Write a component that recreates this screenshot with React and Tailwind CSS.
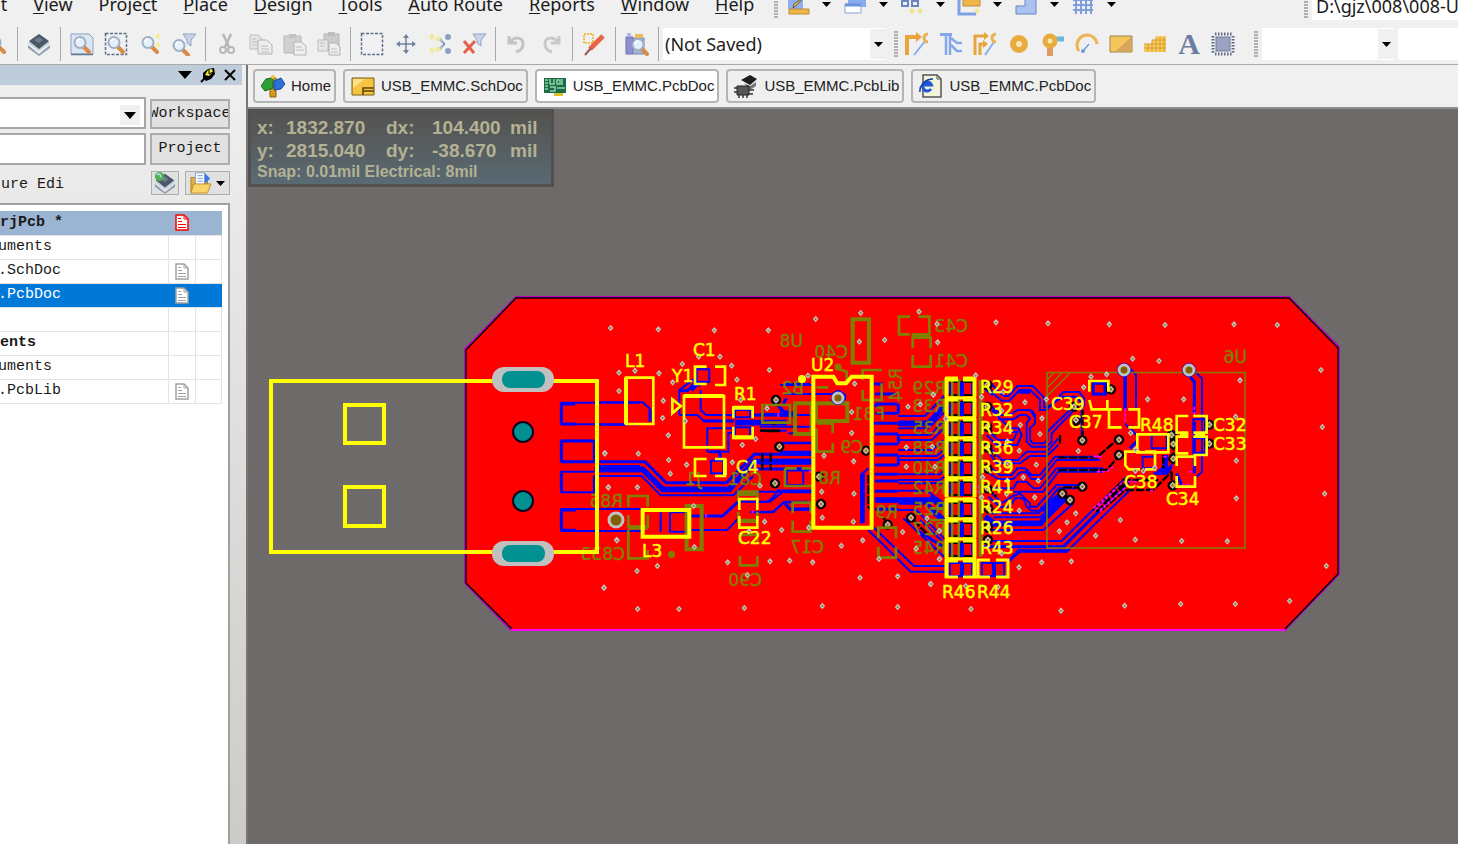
import React, { useState } from 'react';

const MENUS = [
    { text: 'View', key: 0 },
    { text: 'Project', key: 5 },
    { text: 'Place', key: 0 },
    { text: 'Design', key: 0 },
    { text: 'Tools', key: 0 },
    { text: 'Auto Route', key: 0 },
    { text: 'Reports', key: 0 },
    { text: 'Window', key: 0 },
    { text: 'Help', key: 0 }
];

/* ---------- small shared pieces ---------- */

function Svg({ size = 24, children }) {
    return (
        <svg width={ size } height={ size } viewBox="0 0 24 24" fill="none" className="shrink-0" aria-hidden="true">
            { children }
        </svg>
    );
}

function Arrow({ className = '' }) {
    return (
        <svg width="9" height="5" viewBox="0 0 9 5" className={ className } aria-hidden="true">
            <path d="M0 0h9L4.5 5z" fill="#000" />
        </svg>
    );
}

function Grip() {
    return (
        <div className="flex w-1 shrink-0 flex-col gap-px" aria-hidden="true">
            { [...Array(9)].map((_, i) => <span key={ i } className="h-0.5 w-1 bg-[#b0b0b0]" />) }
        </div>
    );
}

function Sep() {
    return <div className="mx-1 h-[34px] w-px shrink-0 bg-[#a8a8a8]" />;
}

function Tool({ label, children }) {
    return (
        <button aria-label={ label } className="flex h-8 w-[34px] shrink-0 items-center justify-center">
            { children }
        </button>
    );
}

function Glass() {
    return (
        <>
            <path d="M14 15l5 5" stroke="#d98a45" strokeWidth="4" strokeLinecap="round" />
            <circle cx="10" cy="10.500" r="5.500" fill="#e4f0fb" stroke="#9fb0c6" strokeWidth="2" />
            <path d="M7 10a3 3 0 013-3" stroke="#fff" strokeWidth="1.500" />
        </>
    );
}

function Funnel() {
    return <path d="M11 2h13l-5 6v6l-4-3V8z" fill="#c6d5ea" stroke="#8fa3bf" />;
}

/* ---------- toolbar icons ---------- */

const icons = {
    layers: (
        <>
            <path d="M1 13l11 9 11-9v3l-11 8L1 16z" fill="#8d9eb0" />
            <path d="M1 11l11 8 11-8-2-2H3z" fill="#c2ced9" />
            <path d="M2 9l10-7 10 7-10 8z" fill="#4a5766" />
            <path d="M7 8l5-3 4 3-4 3z" fill="#6d7d8e" />
        </>
    ),
    zoomDoc: (
        <>
            <path d="M1 2h18l4 4v16H1z" fill="#dbe6f4" stroke="#8b9fbd" />
            <path d="M1 22.500h22" stroke="#5f7597" strokeWidth="1.500" />
            <Glass />
        </>
    ),
    zoomArea: (
        <>
            <path d="M1.500 1.500h21v21h-21z" stroke="#5c6f8c" strokeWidth="1.500" strokeDasharray="3 1.500" />
            <Glass />
        </>
    ),
    zoomSel: (
        <>
            <Glass />
            <path d="M20 1l3 3-3 3-3-3zM20 10l3 3-3 3-3-3z" fill="#f4ee9a" />
        </>
    ),
    zoomFilter: (
        <>
            <Funnel />
            <g transform="translate(-3 3)"><Glass /></g>
        </>
    ),
    cut: (
        <>
            <path d="M8 2l6 13M16 2l-6 13" stroke="#b7b7b7" strokeWidth="2.500" />
            <circle cx="8" cy="18" r="3" stroke="#b7b7b7" strokeWidth="2" />
            <circle cx="16" cy="18" r="3" stroke="#b7b7b7" strokeWidth="2" />
        </>
    ),
    copy: (
        <>
            <path d="M1 3h8l4 4v10H1z" fill="#e6e6e6" stroke="#bcbcbc" />
            <path d="M9 8h9l5 5v9H9z" fill="#ededed" stroke="#b2b2b2" />
            <path d="M12 14h7M12 17h8M12 20h8M3 7h4M3 10h5M3 13h5" stroke="#bdbdbd" />
        </>
    ),
    paste: (
        <>
            <path d="M1 4h17v17H1z" fill="#d0d0d0" stroke="#b9b9b9" />
            <path d="M6 2h7v4H6z" fill="#c2c2c2" />
            <path d="M11 10h7l5 4v9H11z" fill="#efefef" stroke="#b4b4b4" />
            <path d="M13 15h6M13 18h8" stroke="#bdbdbd" />
        </>
    ),
    pasteMulti: (
        <>
            <path d="M7 2h15v16H7z" fill="#cbcbcb" stroke="#b5b5b5" />
            <path d="M11 0h7v4h-7z" fill="#bdbdbd" />
            <path d="M1 8h10v11H1z" fill="#e8e8e8" stroke="#bbb" />
            <path d="M12 11h7l4 4v8H12z" fill="#efefef" stroke="#b0b0b0" />
            <path d="M3 11h5M3 14h5M14 17h6M14 20h7" stroke="#bdbdbd" />
        </>
    ),
    select: <path d="M1.500 1.500h21v21h-21z" stroke="#5c6f8c" strokeWidth="1.500" strokeDasharray="3 1.500" />,
    move: (
        <>
            <path d="M12 4v17M3 12h18" stroke="#71829c" strokeWidth="1.500" />
            <path d="M12 2l3 4H9zM12 22l3-4H9zM2 12l4-3v6zM22 12l-4-3v6z" fill="#71829c" />
        </>
    ),
    deselect: (
        <>
            <path d="M9 6l7 6-7 6M12 6l5 6-5 6" stroke="#7389ad" />
            <path d="M4 1l3 4-3 3-3-3zM10 4l3 3-3 3-3-3zM4 15l3 3-3 4-3-4zM10 14l3 3-3 3-3-3z" fill="#efe998" />
            <circle cx="20" cy="5" r="3" fill="#8ca0c0" />
            <circle cx="20" cy="19" r="3" fill="#8ca0c0" />
        </>
    ),
    clearFilter: (
        <>
            <Funnel />
            <path d="M2 9l10 12M13 9L2 21" stroke="#e8604c" strokeWidth="3" />
        </>
    ),
    undo: <path d="M4 4v7h8M5 10c5-6 13-5 13 2 0 4-3 7-7 8" stroke="#c3c3c3" strokeWidth="3" />,
    redo: <path d="M20 4v7h-8M19 10C14 4 6 5 6 12c0 4 3 7 7 8" stroke="#c9c9c9" strokeWidth="3" />,
    pencil: (
        <>
            <path d="M2 2h9v9H2z" stroke="#eebf4c" strokeWidth="2" strokeDasharray="2 1" />
            <path d="M21 4L8 17" stroke="#e8654a" strokeWidth="5" />
            <path d="M9 16l-6 7" stroke="#9a5a50" strokeWidth="2" />
        </>
    ),
    browse: (
        <>
            <path d="M1 5h7v17H1z" fill="#8f8fd0" stroke="#6e70ae" />
            <path d="M2 1h4v4H2z" fill="#b2b7dd" />
            <path d="M8 6h11v16H8z" fill="#a5b5dc" stroke="#7787b5" />
            <path d="M10 2h8v4h-8z" fill="#ecb95c" />
            <g transform="translate(3 2)"><Glass /></g>
        </>
    ),
    route: (
        <>
            <path d="M2 23V5h10" stroke="#e9a53c" strokeWidth="4" />
            <path d="M11 0l6 5-6 5z" fill="#e9a53c" />
            <path d="M9 23L21 8" stroke="#88aef0" strokeWidth="2" />
            <path d="M23 2a4 4 0 000 8" stroke="#e9b255" strokeWidth="3" />
        </>
    ),
    routeDiff: (
        <>
            <path d="M1 2.500h12" stroke="#84a6ea" strokeWidth="3" />
            <path d="M7 2v21M11 2v21" stroke="#84a6ea" strokeWidth="2.500" />
            <path d="M12 6l6 5h5M12 13l6 6h5" stroke="#84a6ea" strokeWidth="2.500" />
        </>
    ),
    routeMulti: (
        <>
            <path d="M2 23V4h10M7 23V12h4" stroke="#e9a53c" strokeWidth="3" />
            <path d="M11 0l5 4-5 4zM10 8l5 4-5 4z" fill="#e9a53c" />
            <path d="M12 23l9-13" stroke="#88aef0" strokeWidth="2" />
            <path d="M23 2a4 4 0 000 8" stroke="#e9b255" strokeWidth="3" />
        </>
    ),
    pad: <circle cx="12" cy="12" r="6" fill="#f7e7b8" stroke="#e7ab3e" strokeWidth="6" />,
    via: (
        <>
            <path d="M14 7h9" stroke="#6fb7d6" strokeWidth="5" />
            <path d="M9 13v11" stroke="#dd9a63" strokeWidth="6" />
            <circle cx="9" cy="9" r="5" fill="#f7e7b8" stroke="#e7ab3e" strokeWidth="5" />
        </>
    ),
    arc: (
        <>
            <path d="M4 19A10 10 0 1122 12" stroke="#eeb355" strokeWidth="3" />
            <path d="M8 19l6-7" stroke="#6d9be8" strokeWidth="1.500" />
            <circle cx="8" cy="19" r="2" fill="#6d9be8" />
        </>
    ),
    fill: (
        <>
            <path d="M1 4h22v16H1z" fill="#f5c75a" stroke="#a5814e" />
            <path d="M22 5v14H7z" fill="#d9a45c" />
        </>
    ),
    polygon: (
        <>
            <path d="M1 12h8V8h4V4h10v16H1z" fill="#f7cc5c" />
            <path d="M1 12h22M1 16h22M9 8h14M5 12v8M9 8v12M13 5v15M17 5v15M21 5v15" stroke="#d89c33" />
        </>
    ),
    component: (
        <>
            <path d="M5 5h14v14H5z" fill="#9aa3c2" stroke="#707b9b" />
            <path d="M4 2h17M4 22h17" stroke="#5b6a85" strokeWidth="3" strokeDasharray="1.500 1.500" />
            <path d="M2 4v17M22 4v17" stroke="#5b6a85" strokeWidth="3" strokeDasharray="1.500 1.500" />
        </>
    )
};

const TOOL_GROUPS = [
    ['layers'],
    ['zoomDoc', 'zoomArea', 'zoomSel', 'zoomFilter'],
    ['cut', 'copy', 'paste', 'pasteMulti'],
    ['select', 'move', 'deselect', 'clearFilter'],
    ['undo', 'redo'],
    ['pencil'],
    ['browse']
];

const DRAW_TOOLS = ['route', 'routeDiff', 'routeMulti', 'pad', 'via', 'arc', 'fill', 'polygon', 'text', 'component'];

const UTILITY_ICONS = [
    <>
        <path d="M2 4h15v13H2z" fill="#8fb0ec" />
        <path d="M19 4l-9 10-3 2 1-4z" fill="#e9c04f" stroke="#555" />
        <path d="M3 17h20v5H3z" fill="#f0b648" stroke="#b98b3c" />
    </>,
    <>
        <path d="M5 5h18v10H5z" fill="#88aaf0" />
        <path d="M2 12h16v9H2z" fill="#fff" stroke="#8ba4d2" />
        <path d="M2 13h16" stroke="#6f92de" strokeWidth="3" />
    </>,
    <>
        <path d="M2 9h6v5H2zM12 9h6v5h-6z" stroke="#6a86c0" strokeWidth="2" />
        <path d="M12 16l3 3-3 3-3-3zM20 16l3 3-3 3-3-3z" fill="#efe58a" />
    </>,
    <>
        <path d="M2 4v18h17" stroke="#7fa0e4" strokeWidth="3" />
        <path d="M6 6h17v8H6z" fill="#efb648" stroke="#b98b3c" />
        <path d="M20 16l3 3-3 3-3-3z" fill="#efe58a" />
    </>,
    <path d="M2 14h9V5h11v17H2z" fill="#a9c2f2" stroke="#6c87bd" />,
    <path d="M2 8h20M2 13h20M2 18h20M5 4v18M10 4v18M15 4v18M20 4v18" stroke="#7f9fdc" strokeWidth="2" />
];

function MenuBar() {
    return (
        <div className="flex h-6 shrink-0 overflow-hidden">
            <div className="-mt-2 flex w-full items-start">
                <nav className="flex w-[774px] shrink-0 gap-[26px] text-lg leading-6">
                    <button className="-ml-1">it</button>
                    { MENUS.map((menu) => (
                        <button key={ menu.text } className="whitespace-nowrap">
                            { menu.text.slice(0, menu.key) }
                            <u className="underline-offset-2">{ menu.text[menu.key] }</u>
                            { menu.text.slice(menu.key + 1) }
                        </button>
                    )) }
                </nav>
                <Grip />
                <div className="flex w-[526px] shrink-0">
                    { UTILITY_ICONS.map((icon, i) => (
                        <button key={ i } aria-label="Utilities" className="flex w-[57px] items-center pl-2">
                            <Svg>{ icon }</Svg>
                            <Arrow className="ml-3" />
                        </button>
                    )) }
                </div>
                <Grip />
                <input
                    aria-label="Document path"
                    className="ml-1 h-7 min-w-0 flex-1 bg-white pl-1 text-lg leading-6"
                    defaultValue="D:\gjz\008\008-USB_EMMC"
                />
            </div>
        </div>
    );
}

function ToolBar() {
    return (
        <div className="flex h-[41px] shrink-0 items-center overflow-hidden border-b border-[#a9a9a9]">
            <button aria-label="Zoom" className="flex w-[13px] shrink-0 justify-end overflow-hidden pr-1">
                <Svg><Glass /></Svg>
            </button>
            { TOOL_GROUPS.map((group) => (
                <React.Fragment key={ group[0] }>
                    <Sep />
                    { group.map((name) => (
                        <Tool key={ name } label={ name }><Svg>{ icons[name] }</Svg></Tool>
                    )) }
                </React.Fragment>
            )) }
            <Sep />
            <div className="relative w-[223px] shrink-0">
                <select
                    aria-label="Filter"
                    className="h-8 w-full appearance-none bg-white pl-0.5 text-lg leading-8 text-[#222]"
                >
                    <option>(Not Saved)</option>
                </select>
                <span className="pointer-events-none absolute inset-y-px right-0 flex w-4 items-center justify-center bg-[#f0f0f0]">
                    <Arrow />
                </span>
            </div>
            <div className="ml-2"><Grip /></div>
            <div className="flex w-[356px] shrink-0 pl-0.5">
                { DRAW_TOOLS.map((name) => (
                    <Tool key={ name } label={ name }>
                        { name === 'text'
                            ? <span className="font-['Liberation_Serif',serif] text-[30px] leading-8 font-bold text-[#6b7da3]">A</span>
                            : <Svg>{ icons[name] }</Svg> }
                    </Tool>
                )) }
            </div>
            <Grip />
            <div className="relative ml-1 w-[132px] shrink-0">
                <select aria-label="Variant" className="h-8 w-full appearance-none bg-white"><option></option></select>
                <span className="pointer-events-none absolute inset-y-px right-0 flex w-4 items-center justify-center bg-[#f0f0f0]">
                    <Arrow />
                </span>
            </div>
            <div className="ml-1 h-8 min-w-0 flex-1 bg-white" />
        </div>
    );
}

/* ---------- projects panel ---------- */

function DocIcon({ color }) {
    return (
        <svg width="14" height="17" viewBox="0 0 14 17" fill="#fff" stroke={ color } className="mx-auto block" aria-hidden="true">
            <path d="M1 1h8l4 4v11H1z" strokeWidth="1.500" />
            <path d="M9 1v4h4M3 4.500h3M3 7.500h4M3 10.500h8M3 13.500h8" fill="none" />
        </svg>
    );
}

const ROWS = [
    { text: 'rjPcb *', icon: '#ff0000', kind: 'project' },
    { text: 'uments' },
    { text: '.SchDoc', icon: '#a0a0a0' },
    { text: '.PcbDoc', icon: '#a0a0a0', kind: 'selected' },
    { text: '' },
    { text: 'ents', kind: 'bold' },
    { text: 'uments' },
    { text: '.PcbLib', icon: '#a0a0a0' }
];

const ROW_STYLES = {
    project: 'bg-[#9ab4d1] font-bold',
    selected: 'bg-[#0078d7] text-white',
    bold: 'font-bold'
};

function ProjectsPanel() {
    return (
        <aside className="flex w-[248px] shrink-0 flex-col border-r-2 border-[#777] bg-linear-to-b from-[#f0f0f0] to-[#cdcbc7] font-['Liberation_Mono',monospace] text-[15px]">
            <div className="mr-1 flex h-5 shrink-0 items-center justify-end gap-2 bg-[#bfcddb] pr-1.5">
                <button aria-label="Panel menu">
                    <svg width="14" height="8" viewBox="0 0 14 8"><path d="M0 0h14L7 8z" /></svg>
                </button>
                <button aria-label="Pin">
                    <svg width="16" height="16" viewBox="0 0 16 16">
                        <path d="M1 15l4-4" stroke="#000" strokeWidth="2" />
                        <path d="M3 6l5-4 6-1 1 6-4 5-5 2-3-3z" fill="#000" />
                        <path d="M8 3l4-1 1 3-4 4-4-1z" fill="#f2ea3c" />
                        <path d="M9 3v4l4-2" stroke="#000" fill="none" />
                    </svg>
                </button>
                <button aria-label="Close">
                    <svg width="12" height="12" viewBox="0 0 12 12"><path d="M1 1l10 10M11 1L1 11" stroke="#000" strokeWidth="2" /></svg>
                </button>
            </div>
            <div className="mt-3 flex pr-4">
                <div className="relative flex-1">
                    <select aria-label="Workspace name" className="h-8 w-full appearance-none border-2 border-l-0 border-[#a7a7a7] bg-white">
                        <option></option>
                    </select>
                    <span className="pointer-events-none absolute top-2 right-1.5 flex h-5 w-5 items-center justify-center bg-[#f0f0f0]">
                        <svg width="12" height="7" viewBox="0 0 12 7"><path d="M0 0h12L6 7z" /></svg>
                    </span>
                </div>
                <button className="mt-0.5 ml-1 flex h-[30px] w-20 items-center justify-center overflow-hidden border-2 border-[#adadad] bg-[#e1e1e1]">
                    Workspace
                </button>
            </div>
            <div className="mt-1 flex pr-4">
                <input aria-label="Project name" className="h-8 min-w-0 flex-1 border-2 border-l-0 border-[#a7a7a7] bg-white" />
                <button className="ml-1 h-8 w-20 border-2 border-[#adadad] bg-[#e1e1e1]">Project</button>
            </div>
            <div className="mt-1 flex h-7 items-center pr-4">
                <label className="flex-1 overflow-hidden pt-1 -indent-2 whitespace-nowrap">ture Edi</label>
                <button aria-label="Refresh" className="mr-1.5 flex h-6 w-7 items-center justify-center border border-[#adadad] bg-[#e1e1e1]">
                    <Svg size={ 22 }>
                        { icons.layers }
                        <circle cx="6" cy="5" r="5" fill="#4fb04a" />
                        <path d="M3 3c3-2 5 0 4 3" stroke="#a6d8ef" strokeWidth="2" />
                    </Svg>
                </button>
                <button aria-label="Open" className="flex h-6 w-[45px] items-center justify-center gap-1 border border-[#adadad] bg-[#e1e1e1]">
                    <Svg size={ 22 }>
                        <path d="M1 6h8l2 3h8v13H1z" fill="#e6ae3a" stroke="#b27f22" />
                        <path d="M6 1h10v13H6z" fill="#fff" stroke="#7f9fd6" />
                        <path d="M8 4h6M8 7h6M8 10h6" stroke="#6f93d8" />
                        <path d="M16 1l6 6-6 6z" fill="#3c78e8" />
                        <path d="M4 13h19l-4 10H1z" fill="#f8d468" stroke="#b98a2b" />
                    </Svg>
                    <Arrow />
                </button>
            </div>
            <div className="mt-1.5 mr-4 min-h-0 flex-1 border-t-2 border-r-2 border-[#a0a0a0] bg-white pt-1.5 pr-1.5">
                <table className="w-full table-fixed border-collapse">
                    <tbody>
                        { ROWS.map((row, i) => (
                            <tr key={ i } className={ `h-6 border-b border-[#e3e3e3] ${ ROW_STYLES[row.kind] || '' }` }>
                                <td className={ `overflow-hidden leading-5 whitespace-nowrap ${ row.kind === 'project' || row.kind === 'bold' ? '' : '-indent-0.5' }` }>
                                    { row.text }
                                </td>
                                <td className={ `w-[27px] ${ row.kind === 'project' || row.kind === 'selected' ? '' : 'border-x border-[#e3e3e3]' }` }>
                                    { row.icon && <DocIcon color={ row.icon } /> }
                                </td>
                                <td className={ `w-[26px] ${ row.kind === 'project' || row.kind === 'selected' ? '' : 'border-r border-[#e3e3e3]' }` }></td>
                            </tr>
                        )) }
                    </tbody>
                </table>
            </div>
        </aside>
    );
}

/* ---------- document tabs ---------- */

const TABS = [
    {
        text: 'Home',
        icon: (
            <>
                <path d="M9 4h6v19H9z" fill="#d59a1c" stroke="#8c6310" />
                <path d="M12 4v10l-8 3-4-5 5-7z" fill="#2f9e35" stroke="#176b1f" />
                <path d="M13 7l7-3 4 6-4 5-7 1z" fill="#2f6fd6" stroke="#164a9e" />
                <circle cx="12" cy="3" r="2" fill="#f0c23c" />
            </>
        )
    },
    {
        text: 'USB_EMMC.SchDoc',
        icon: (
            <>
                <path d="M1 4h22v17H1z" fill="#f5c542" stroke="#7d5c10" />
                <path d="M2 5h12L2 14z" fill="#fbe28a" />
                <path d="M12 21v-7h11M12 17h11" stroke="#5d4308" strokeWidth="1.500" />
            </>
        )
    },
    {
        text: 'USB_EMMC.PcbDoc',
        icon: (
            <>
                <path d="M1 4h22v15H1z" fill="#1c6b48" />
                <path d="M2 6h3M2 9h3M2 12h3M2 15h3M7 5v5h4V5M7 13h5v4H7M14 6h3v4h-3zM19 5v6M14 14h8" stroke="#8fd3a5" strokeWidth="1.500" />
                <path d="M11 19h9v3h-9z" fill="#d8c22c" />
            </>
        )
    },
    {
        text: 'USB_EMMC.PcbLib',
        icon: (
            <>
                <path d="M7 6l9-5 7 4-7 6z" fill="#1d1d1d" />
                <path d="M10 9l6 3 6-4v4l-6 4z" fill="#777" />
                <path d="M3 12h12v9H3z" fill="#565656" stroke="#222" />
                <path d="M0 14h3M0 18h3M15 16h5M15 20h4M5 21v3M9 21v3M13 21v3" stroke="#333" strokeWidth="1.500" />
            </>
        )
    },
    {
        text: 'USB_EMMC.PcbDoc',
        icon: (
            <>
                <path d="M4 1h14l4 4v18H4z" fill="#f3f3dc" stroke="#555" strokeWidth="1.500" />
                <path d="M18 1v4h4" stroke="#555" />
                <path d="M12 15a4.500 4.500 0 11.500-4H5" stroke="#1e58d8" strokeWidth="3" />
                <path d="M1 18C0 12 6 5 14 5" stroke="#153f9c" strokeWidth="1.500" />
            </>
        )
    }
];

function DocumentTabs() {
    const [active, setActive] = useState(2);

    return (
        <div className="flex h-11 shrink-0 gap-[7px] overflow-hidden border-b-2 border-[#8f8f8f] px-[5px] pt-1">
            { TABS.map((tab, i) => (
                <button
                    key={ i }
                    onClick={ () => setActive(i) }
                    className={ `flex h-[34px] shrink-0 items-center gap-1.5 rounded-sm border-2 border-[#b5b5b5] pr-[3px] pl-1.5 font-['Liberation_Sans',sans-serif] text-[15px] text-[#222] ${ active === i ? 'bg-white' : 'bg-[#efefef]' }` }
                >
                    <Svg>{ tab.icon }</Svg>
                    { tab.text }
                </button>
            )) }
        </div>
    );
}

/* ---------- board ---------- */

// Board parts are entered on a grid of thirds of a pixel, each from its own origin.
function Layer({ x, y, children }) {
    return <g transform={ `translate(${ x } ${ y }) scale(0.33333)` }>{ children }</g>;
}

const TRACES = [
    {
        x: 260, y: 290,
        thin: [
            'M1140 338H904V403H1140', 'M1002 518V452H904V515H1002', 'M1140 558H1003V607H904V545H1003', 'M1140 657H904V723H1140',
            'M1002 515L1020 528H1140', 'M1010 515H1140'
        ],
        mid: ['M904 342V400M904 342H945M904 402H948', 'M904 455V513M904 453H1000M904 515H1000', 'M904 548V604', 'M904 660V720M904 660H948M904 721H948', 'M1003 455V500M1003 560V604'],
        wide: ['M1003 538H1140']
    },
    {
        x: 600, y: 310,
        thin: [
            'M0 277H128L150 297V330', 'M0 344H80', 'M0 498H125L182 556H400L460 498', 'M0 597H130M0 663H130',
            'M238 315V240L285 205', 'M302 240V300L318 315H400', 'M238 315H292L312 333H400', 'M322 425V355H400',
            'M322 425H385V368H405', 'M270 660H382L420 620', 'M420 575H505L530 550', 'M450 607H520L550 577H640', 'M460 545H640',
            'M540 225H640M560 252H640M545 398H640', 'M290 178H328V215H290Z', 'M333 452H370V490H333Z', 'M182 607V665M210 607H262M210 607V665H262',
            'M405 300H450V322H405ZM405 352H450V380H405Z', 'M560 475H610V525H560Z', 'M480 362H560M480 315H640'
        ],
        mid: [
            'M0 455H135L198 518H380L463 433H560', 'M460 477H560M540 427H640', 'M238 242H262L290 215M275 242L290 225H302',
            'M150 300V335', 'M270 618H368L420 570', 'M460 315H560M310 333H400', 'M330 425H360V445',
            'M560 265L550 280M525 275L550 305', 'M555 580L570 598H640', 'M640 478H600M560 433H640', 'M530 543H640'
        ],
        wide: ['M0 478H128L188 538H388L462 455H640', 'M405 338H560', 'M540 312H580']
    },
    {
        x: 760, y: 300,
        thin: [
            'M415 348H495L552 288', 'M415 385H505L552 338', 'M415 405H510L552 362', 'M415 420H515L552 385', 'M415 450H515L550 420',
            'M415 468H530L552 450', 'M415 480H535L552 465', 'M415 523H540L552 510', 'M415 540H540L552 530', 'M415 550H550', 'M415 572H500L552 610',
            'M415 630H470L552 715', 'M325 690L452 815H555', 'M340 682L462 798H555', 'M430 655L552 770', 'M480 660L552 728',
            'M75 282H215M75 252H150M85 400H155M60 430H155', 'M325 505L303 525V670', 'M0 342H80M0 380H155',
            'M220 310V280L235 272L255 285V300', 'M0 605H30L70 575H150M0 635H40L75 605H150'
        ],
        mid: [
            'M340 252H370M345 282H410M345 312H412M345 340H415M340 370H415M345 402H415M345 432H415M345 465H415M345 495H415M345 523H415M345 543H415M345 574H415M345 603H415M345 628H415',
            'M310 515V670', 'M80 463H155M80 510H155M80 575H155M90 628H155', 'M40 300L75 340', 'M415 610H500L552 660', 'M470 690L552 742',
            'M345 312L355 325M415 312V340M415 402V430M415 465V495'
        ],
        wide: ['M415 370H505L552 318', 'M0 485H155', 'M60 340H90', 'M415 600H530L552 620', 'M345 600H415']
    },
    {
        x: 930, y: 360,
        thin: [
            'M165 65L195 105L215 122H238L268 90H300L330 118V150H350L400 96H448L462 115V140',
            'M180 65L200 90L222 108H236L262 78H308L342 112V142H352L398 110H440L455 130V240',
            'M185 140L215 165H240L262 150H300L315 165V190L300 205V240L308 250H342L352 240V215L430 140',
            'M190 150L210 178H250L270 165H290L300 175L290 190V245L305 260H350L365 245V220L432 150',
            'M170 210L205 240H250L262 215H240M170 225L200 255H262L275 225L265 205H240L225 190L185 150',
            'M180 262L215 300H265L290 275H350L385 235', 'M175 275L200 310H270L300 288H350L385 255',
            'M185 325L210 345H245L262 325H285L305 345H330L375 290H500M170 335L205 357H250L270 337H290L305 357H335L380 300H510',
            'M180 385H250L262 365H290L310 385H330L380 325H520M250 395H310L340 395L385 335H520',
            'M185 400L215 430L245 410L270 400L300 430V440H320L380 375H455', 'M175 410L210 440H240L255 415H280L290 440L305 452H330L385 385H440',
            'M180 460H325L385 405M190 472H330L388 420', 'M170 510H340L430 430', 'M150 543H395L590 350', 'M150 560H400L600 365',
            'M235 605L270 575H410L600 390', 'M0 618H45M0 635H45'
        ],
        mid: ['M265 97H300', 'M305 152L315 170', 'M150 560H400L520 440', 'M240 600L265 572H412', 'M585 45V150', 'M190 492H340', 'M165 85L190 105', 'M490 70H525V102H490Z'],
        wide: ['M165 490H330L400 415', 'M340 480L410 410', 'M165 470L200 495', 'M335 450L385 410', 'M0 445L40 480', 'M0 410L45 445']
    },
    {
        x: 1030, y: 340,
        thin: [
            'M300 85L318 105V205', 'M500 100L516 115V395L500 410', 'M285 250L320 285', 'M338 350H375V385H338Z',
            'M365 285H410V325H365Z', 'M490 238H525V278H490ZM490 295H525V338H490Z', 'M370 400H400L430 370', 'M190 130H228V163H190Z'
        ],
        mid: ['M286 110V200', 'M480 110L493 125V220M493 245V400', 'M375 400H410L425 380M440 400L455 435', 'M300 325L320 305'],
        wide: ['M405 345V385L385 400']
    }
];

// Copper cleared around nets of other layers
const CLEARANCE = [
    { x: 600, y: 310, d: 'M525 262L515 275M530 335L520 345M527 405L540 425M515 510L525 530M487 430V480M512 430V480M500 363H540' },
    { x: 760, y: 300, d: 'M325 525V620L335 632M370 655L385 672M460 660L500 700M0 392H60' },
    { x: 930, y: 360, d: 'M458 150V235M165 75L185 95M165 200L200 225M172 262L195 290M170 385L200 410M150 545H180M435 180V210M390 225V255M385 293H500L560 240M385 330H530L565 290M400 382H450M500 455L595 365M520 430L580 370' },
    { x: 1030, y: 340, d: 'M190 510L280 420H385M215 510L285 450H370L425 395M430 275V350M425 395V435M400 345V385' }
];

const CLASHES = [
    { x: 930, y: 360, d: 'M490 290H515M500 335H530L550 320M495 450L560 385M510 455L570 395M145 375V400' },
    { x: 1030, y: 340, d: 'M286 205V250M493 200V225M195 350H210M190 505L280 425H330M210 510L290 440M400 350H420M360 452H375M455 435H485M475 395H490' },
    { x: 600, y: 310, d: 'M535 310V320M318 612V622M630 480V490M458 600V610' }
];

const OLIVE = [
    {
        x: 600, y: 310,
        d: 'M85 590V558H143V590M85 615V650H143V615M85 660V745H143V720M85 650H143M415 575V545H472V575M415 605V635H472V605M420 700V675H472V700M420 738V766H472V738M487 285H570V338H487Z',
        thick: 'M260 588H305V718H260ZM415 552H472M415 632H472M85 653H143'
    },
    {
        x: 760, y: 300,
        d: 'M450 103H417V50H450M475 50H508V103H475M458 145V113H512V145M458 165V200H512V165M170 262H205M230 205L260 215V250M308 240V210H365M308 270V300H365V250M75 505H110M125 505H155M75 505V558H155M98 640V608H152V640M98 662V695H152V662M355 715V683H408V715M355 740V773H408V740M170 385V455H218V430M170 370H218V400',
        thick: 'M278 58H327V188H278ZM105 310H155V402H105ZM168 310H262V363H168ZM455 105H510'
    },
    { x: 930, y: 360, d: 'M0 445H45M0 480H45', thick: 'M152 60V590' }
];

const YELLOW = [
    {
        x: 600, y: 310,
        d: 'M78 203H160V342H78ZM320 170H285V222H320M345 170H375V225H345M252 258H372V412H252ZM217 268V310L242 288ZM400 325V292H458V325M400 350V384H458V350M320 447H285V498H320M345 447H375V498H345M418 600V567H472V600M418 618V653H472V618',
        thick: 'M128 600H268V680H128ZM375 447V495M400 293H458M400 382H458M252 258H372M78 203V342'
    },
    {
        x: 760, y: 300,
        d: '',
        thick: 'M160 230H220L232 250H258L275 230H335V683H160Z'
    },
    {
        x: 1030, y: 340,
        d: 'M178 155V123H235V155M178 180L185 208H232V180M275 262H237V208H275M295 208H327V262H295M322 283H415V337H322ZM330 388H296L286 376V335H330M345 335H375V388H345M475 228H440V278H475M490 228H530V278H490M475 290H440V340H475M490 290H530V345H490M440 378V350H495V378M440 408V440H495V408',
        thick: 'M450 284H475M495 284H525'
    }
];

const VIAS = [
    { x: 260, y: 290, at: [[1052, 114], [1077, 248], [1077, 303], [1034, 490], [1045, 592], [1070, 750], [1032, 893]] },
    {
        x: 600, y: 310,
        at: [
            [175, 58], [343, 61], [505, 61], [647, 27], [105, 182], [177, 190], [247, 162], [296, 140], [360, 140],
            [395, 167], [411, 209], [218, 217], [190, 272], [188, 324], [205, 376], [256, 333], [422, 270], [508, 180], [501, 295],
            [467, 387], [427, 405], [397, 457], [206, 450], [260, 464], [211, 491], [115, 431], [15, 430], [25, 532], [112, 532],
            [480, 527], [494, 635], [545, 660], [447, 664], [383, 757], [510, 754], [569, 752], [638, 757], [442, 795], [172, 768],
            [111, 783], [283, 711], [281, 588], [51, 691], [12, 833], [113, 897], [237, 897], [433, 894]
        ]
    },
    {
        x: 760, y: 300,
        at: [
            [302, 39], [477, 35], [298, 125], [374, 120], [531, 72], [533, 127], [144, 227], [284, 251], [275, 336], [275, 399],
            [444, 320], [481, 313], [520, 284], [192, 467], [281, 484], [439, 442], [517, 440], [439, 500], [525, 500], [185, 575],
            [282, 581], [187, 653], [280, 665], [146, 683], [308, 721], [244, 737], [357, 777], [428, 696], [501, 655], [538, 693],
            [469, 746], [538, 777], [300, 833], [413, 829], [511, 852], [557, 356], [187, 918], [413, 921], [633, 927]
        ]
    },
    {
        x: 930, y: 360,
        at: [
            [137, 46], [10, 104], [155, 111], [285, 127], [220, 95], [215, 152], [271, 195], [336, 175], [349, 118], [330, 222],
            [232, 244], [268, 272], [319, 314], [237, 312], [158, 352], [280, 352], [325, 362], [232, 362], [314, 412], [155, 412],
            [230, 402], [268, 452], [215, 580], [335, 607], [424, 604], [267, 622], [388, 514], [411, 487], [437, 460], [445, 273],
            [461, 82], [483, 50], [530, 43], [497, 527], [571, 480], [204, 681], [107, 678], [3, 672], [29, 597], [28, 513]
        ]
    },
    {
        x: 1030, y: 340,
        at: [
            [-102, -53], [54, -50], [238, -47], [405, -45], [612, -47], [742, -45],
            [308, 56], [387, 63], [873, 90], [630, 121], [353, 178], [461, 178], [617, 230], [877, 261], [619, 362], [302, 279],
            [884, 461], [619, 475], [316, 599], [455, 603], [592, 604], [889, 678], [93, 812], [284, 797], [452, 792], [616, 792],
            [779, 783], [316, 393], [340, 393], [374, 383], [316, 328]
        ]
    }
];

const RING_VIAS = [
    { x: 760, y: 300, at: [[48, 300], [58, 440], [45, 550], [177, 530], [183, 612], [318, 452], [453, 653], [383, 674]] },
    { x: 930, y: 360, at: [[172, 75], [172, 140], [172, 200], [172, 262], [172, 325], [172, 385], [175, 445], [174, 502], [174, 540]] },
    {
        x: 1030, y: 340,
        at: [
            [267, 299], [267, 345], [157, 301], [157, 440], [97, 461], [120, 480], [243, 148], [538, 254], [538, 311], [430, 356],
            [428, 436], [425, 285], [430, 312], [132, 200], [138, 240]
        ]
    }
];

const LABELS = [
    ['L1', 625, 367], ['C1', 693, 356], ['Y1', 672, 382], ['R1', 734, 400], ['C4', 736, 473], ['C22', 738, 544],
    ['L3', 642, 557], ['U2', 811, 371], ['R46', 942, 598], ['R44', 977, 598],
    ['R29', 980, 393], ['R32', 980, 416], ['R34', 980, 434], ['R36', 980, 454], ['R39', 980, 473], ['R41', 980, 493],
    ['R24', 980, 513], ['R26', 980, 534], ['R43', 980, 554],
    ['C39', 1051, 410], ['C37', 1069, 428], ['R48', 1140, 431], ['C32', 1213, 431], ['C33', 1213, 450],
    ['C38', 1124, 488], ['C34', 1166, 505]
];

// Bottom side, read from behind: x is the right-hand edge
const MIRRORED = [
    ['U8', 803, 347], ['C40', 848, 358], ['C43', 968, 332], ['C41', 968, 367], ['U6', 1247, 363], ['R85', 623, 507],
    ['C833', 625, 560], ['C17', 824, 553], ['C90', 762, 586], ['B2', 804, 394], ['C9', 863, 453], ['R8', 841, 484],
    ['R9', 898, 518], ['FB1', 885, 420], ['J1', 701, 485], ['C81', 762, 485],
    ['R29', 946, 394], ['R33', 946, 412], ['R35', 946, 434], ['R38', 946, 454], ['R40', 946, 474], ['R42', 946, 494],
    ['R25', 946, 515], ['R27', 946, 535], ['R45', 946, 554]
];

function Resistor({ x, y, blue }) {
    return (
        <g>
            <path d={ `M${ x + 5 } ${ y + 4 }h22v13h-22z` } fill="#f00" stroke={ blue ? '#00f' : '#000' } strokeWidth="2" />
            { !blue && <path d={ `M${ x + 7 } ${ y + 1 }v18M${ x + 14 } ${ y + 1 }v18` } stroke="#808000" strokeWidth="3" /> }
            <path d={ `M${ x + 17 } ${ y + 4 }v14` } stroke="#00f" strokeWidth="4" />
            <path d={ `M${ x + 5 } ${ y + 5 }v11M${ x + 27 } ${ y + 5 }v11` } stroke="#00f" strokeWidth="2" />
        </g>
    );
}

function Board() {
    const edge = '516,297 1289,297 1339,347 1339,574 1285,630 511,630 465,583 465,349';

    return (
        <svg viewBox="248 109 1210 735" preserveAspectRatio="xMinYMin slice" className="block h-full w-full" fill="none" role="img" aria-label="Board layout">
            <polygon points={ edge } fill="#f00" stroke="#c000c0" strokeWidth="2" />
            <path d="M512 629L466 583V350L516 298H1289L1338 348V574L1285 629" stroke="#000" strokeWidth="1.500" />
            <path d="M511 630H1285" stroke="#f0f" strokeWidth="2" />

            { TRACES.map((part) => (
                <Layer key={ part.x } x={ part.x } y={ part.y }>
                    <path d={ part.thin.join('') } stroke="#00f" strokeWidth="6" />
                    <path d={ part.mid.join('') } stroke="#00f" strokeWidth="9" />
                    <path d={ part.wide.join('') } stroke="#00f" strokeWidth="17" />
                </Layer>
            )) }
            { CLEARANCE.map((part) => (
                <Layer key={ part.x } x={ part.x } y={ part.y }>
                    <path d={ part.d } stroke="#000" strokeWidth="7" strokeDasharray="26 5" />
                </Layer>
            )) }
            { CLASHES.map((part) => (
                <Layer key={ part.x } x={ part.x } y={ part.y }>
                    <path d={ part.d } stroke="#f0f" strokeWidth="5" strokeDasharray="10 5" />
                </Layer>
            )) }
            { RING_VIAS.map((part) => (
                <Layer key={ part.x } x={ part.x } y={ part.y }>
                    { part.at.map(([x, y]) => (
                        <g key={ `${ x }-${ y }` }>
                            <circle cx={ x } cy={ y } r="12" stroke="#000" strokeWidth="7" />
                            <path d={ `M${ x } ${ y - 8 }l7 8-7 8-7-8z` } fill="#808000" stroke="#c0c0c0" strokeWidth="4" />
                        </g>
                    )) }
                </Layer>
            )) }

            {/* bottom overlay */ }
            { OLIVE.map((part) => (
                <Layer key={ part.x } x={ part.x } y={ part.y }>
                    <path d={ part.d } stroke="#808000" strokeWidth="8" />
                    <path d={ part.thick } stroke="#808000" strokeWidth="12" />
                </Layer>
            )) }
            <g stroke="#808000">
                <path d="M1047 372.500H1245V548H1047Z" strokeWidth="1.500" />
                <path d="M1047 380L1054 373M1047 388L1062 373M1047 396L1070 373" strokeWidth="1.500" />
            </g>
            <circle cx="671.500" cy="554.500" r="3.500" fill="#808000" />
            <circle cx="838" cy="367" r="3.500" fill="#808000" />
            <g fill="#808000" stroke="#808000" strokeWidth="0.400" className="font-['DejaVu_Sans',sans-serif] text-[17px]">
                { MIRRORED.map(([text, x, y]) => (
                    <text key={ `${ text }-${ y }` } transform={ `translate(${ x } ${ y }) scale(-1 1)` }>{ text }</text>
                )) }
                <text transform="translate(902 368) scale(-1 1) rotate(90)">R54</text>
            </g>

            {/* connector */ }
            <g stroke="#ff0">
                <path d="M271 381H597V552H271Z" strokeWidth="4" />
                <path d="M345 405H384V443H345ZM345 487H384V526H345Z" strokeWidth="4" />
            </g>
            { [380, 554].map((y) => (
                <g key={ y }>
                    <rect x="492" y={ y - 13 } width="62" height="25" rx="12" fill="#c0c0c0" />
                    <rect x="502" y={ y - 9 } width="43" height="17" rx="8" fill="#009090" />
                </g>
            )) }
            { [432, 501].map((y) => (
                <circle key={ y } cx="523" cy={ y } r="10" fill="#009090" stroke="#100020" strokeWidth="2" />
            )) }

            {/* top overlay */ }
            { [378, 398, 418, 438, 458, 478, 499, 519, 539, 559].map((y) => (
                <g key={ y }>
                    <Resistor x={ 945 } y={ y } blue={ y === 559 } />
                    <path d={ `M946.500 ${ y }V${ y + 19 }M974.500 ${ y }V${ y + 19 }` } stroke="#ff0" strokeWidth="4" />
                    <path d={ `M945 ${ y + 1 }H958M963 ${ y + 1 }H976` } stroke="#ff0" strokeWidth="5" />
                    { y > 378 && <path d={ `M947 ${ y }H974` } stroke="#ff0" strokeWidth="3" /> }
                </g>
            )) }
            <Resistor x={ 977 } y={ 559 } blue />
            <path d="M945 577H958M963 577H990M996 577H1008V560H996M990 560H978V577" stroke="#ff0" strokeWidth="3" />
            { YELLOW.map((part) => (
                <Layer key={ part.x } x={ part.x } y={ part.y }>
                    <path d={ part.d } stroke="#ff0" strokeWidth="8" />
                    <path d={ part.thick } stroke="#ff0" strokeWidth="12" />
                </Layer>
            )) }
            <circle cx="802" cy="379" r="4" fill="#ff0" />
            { VIAS.map((part) => (
                <Layer key={ part.x } x={ part.x } y={ part.y }>
                    { part.at.map(([x, y]) => (
                        <path key={ `${ x }-${ y }` } d={ `M${ x } ${ y - 7 }l6 7-6 7-6-7z` } fill="#808000" stroke="#c0c0c0" strokeWidth="4" />
                    )) }
                </Layer>
            )) }
            <g fill="#ff0" stroke="#ff0" strokeWidth="0.500" className="font-['DejaVu_Sans',sans-serif] text-[17px]">
                { LABELS.map(([text, x, y]) => <text key={ text } x={ x } y={ y }>{ text }</text>) }
            </g>
            { [[616, 520, 7], [838, 398, 5], [1124, 370, 5], [1189, 370, 5]].map(([x, y, r]) => (
                <g key={ x }>
                    { r === 5 && <circle cx={ x } cy={ y } r="7" fill="#00c" /> }
                    <circle cx={ x } cy={ y } r={ r } fill="#806000" stroke="#c0c0c0" strokeWidth="3" />
                </g>
            )) }
        </svg>
    );
}

function HeadsUp() {
    return (
        <div className="absolute top-0 left-0 w-[306px] border-[3px] border-[#53504f] bg-linear-to-b from-[#545250] to-[#596a73] px-1.5 pt-1 pb-0.5 font-['Liberation_Sans',sans-serif] font-bold text-[#b3b293]">
            <div className="grid grid-cols-[29px_100px_46px_78px_1fr] text-[19px] leading-[23px] whitespace-nowrap">
                <span>x:</span>
                <span>1832.870</span>
                <span>dx:</span>
                <span>104.400</span>
                <span>mil</span>
                <span>y:</span>
                <span>2815.040</span>
                <span>dy:</span>
                <span>-38.670</span>
                <span>mil</span>
            </div>
            <p className="text-base leading-5">Snap: 0.01mil Electrical: 8mil</p>
        </div>
    );
}

function App() {
    return (
        <div className="flex h-screen flex-col overflow-hidden bg-[#f0f0f0] font-['Noto_Sans',sans-serif] text-[#1a1a1a]">
            <MenuBar />
            <ToolBar />
            <div className="flex min-h-0 flex-1">
                <ProjectsPanel />
                <main className="flex min-w-0 flex-1 flex-col">
                    <DocumentTabs />
                    <div className="relative min-h-0 flex-1 overflow-hidden bg-[#6e6a69]">
                        <Board />
                        <HeadsUp />
                    </div>
                </main>
            </div>
        </div>
    );
}

export default App;
